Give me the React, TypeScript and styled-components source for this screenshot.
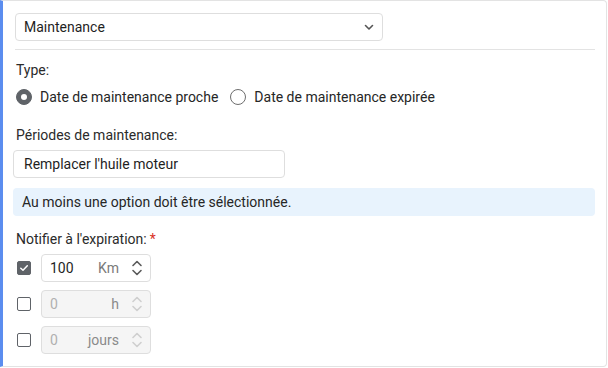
import React from "react";
import styled, { createGlobalStyle } from "styled-components";

const GlobalStyle = createGlobalStyle`
  html, body {
    margin: 0;
    padding: 0;
    background: #ffffff;
  }
  body {
    font-family: Roboto, "Liberation Sans", Arial, sans-serif;
    font-size: 14px;
    color: #212121;
  }
`;

const Card = styled.div`
  box-sizing: border-box;
  width: 607px;
  height: 367px;
  border: 1px solid #e3e3e3;
  border-left: 3px solid #5b8def;
  border-radius: 0 4px 4px 0;
  padding: 12px 11px 0 10px;
  display: flex;
  flex-direction: column;
`;

const SelectBox = styled.div`
  box-sizing: border-box;
  width: 368px;
  height: 28px;
  margin-left: 2px;
  border: 1px solid #dedede;
  border-radius: 4px;
  display: flex;
  align-items: center;
  justify-content: space-between;
  padding: 0 7px 0 8px;
  font-size: 14px;
  color: #1f1f1f;
`;

const Divider = styled.div`
  height: 1px;
  background: #e3e3e3;
  margin: 8px 0 0 2px;
`;

const Label = styled.div<{ $top: number }>`
  margin-top: ${(p) => p.$top}px;
  margin-left: 3px;
  line-height: 20px;
  font-size: 14px;
  color: #2b2b2b;
`;

const Required = styled.span`
  color: #d93025;
  margin-left: 3px;
`;

const RadioRow = styled.div`
  display: flex;
  align-items: center;
  margin-top: 7px;
  height: 20px;
`;

const RadioOption = styled.label`
  display: flex;
  align-items: center;
  gap: 8px;
  margin-right: 9px;
  margin-left: 3px;
  color: #262626;
`;

const RadioDot = styled.span<{ $checked?: boolean }>`
  box-sizing: border-box;
  width: 16px;
  height: 16px;
  border-radius: 50%;
  display: inline-flex;
  align-items: center;
  justify-content: center;
  background: ${(p) => (p.$checked ? "#5f6368" : "#fff")};
  border: 1px solid ${(p) => (p.$checked ? "#5f6368" : "#6e6e6e")};
  &::after {
    content: "";
    display: ${(p) => (p.$checked ? "block" : "none")};
    width: 6px;
    height: 6px;
    border-radius: 50%;
    background: #fff;
  }
`;

const TextInput = styled.div`
  box-sizing: border-box;
  width: 272px;
  height: 28px;
  margin-top: 5px;
  border: 1px solid #dedede;
  border-radius: 4px;
  display: flex;
  align-items: center;
  padding: 0 10px;
  color: #1f1f1f;
`;

const InfoBox = styled.div`
  box-sizing: border-box;
  height: 28px;
  margin-top: 10px;
  background: #e8f3fd;
  border-radius: 4px;
  display: flex;
  align-items: center;
  padding: 0 9px;
  color: #262626;
`;

const Rows = styled.div`
  display: flex;
  flex-direction: column;
  gap: 8px;
  margin-top: 5px;
`;

const Row = styled.div`
  display: flex;
  align-items: center;
  gap: 10px;
  padding-left: 4px;
`;

const Check = styled.span<{ $checked?: boolean }>`
  box-sizing: border-box;
  width: 14px;
  height: 14px;
  border-radius: 2px;
  border: 1.5px solid #5f6368;
  background: ${(p) => (p.$checked ? "#5f6368" : "#fff")};
  display: inline-flex;
  align-items: center;
  justify-content: center;
`;

const NumberField = styled.div<{ $disabled?: boolean }>`
  box-sizing: border-box;
  width: 110px;
  height: 28px;
  border: 1px solid #dedede;
  border-radius: 4px;
  background: ${(p) => (p.$disabled ? "#f5f5f5" : "#fff")};
  display: flex;
  align-items: center;
  padding: 0 7px 0 8px;
  color: ${(p) => (p.$disabled ? "#b0b0b0" : "#1f1f1f")};
`;

const Value = styled.span`
  flex: 1;
`;

const Unit = styled.span<{ $disabled?: boolean }>`
  color: ${(p) => (p.$disabled ? "#8a8a8a" : "#7a7a7a")};
  margin-right: 12px;
`;

const Spinner = styled.svg`
  display: block;
`;

const Chevron = () => (
  <svg width="12" height="12" viewBox="0 0 12 12">
    <path d="M2.5 4.5 L6 8 L9.5 4.5" fill="none" stroke="#555" strokeWidth="1.6" strokeLinecap="round" strokeLinejoin="round" />
  </svg>
);

const Tick = () => (
  <svg width="10" height="10" viewBox="0 0 10 10">
    <path d="M1.8 5.2 L4 7.3 L8.3 2.8" fill="none" stroke="#fff" strokeWidth="1.5" strokeLinecap="round" strokeLinejoin="round" />
  </svg>
);

const UpDown = ({ disabled }: { disabled?: boolean }) => (
  <Spinner width="12" height="18" viewBox="0 0 12 18">
    <path
      d="M2 6.5 L6 2.5 L10 6.5 M2 11.5 L6 15.5 L10 11.5"
      fill="none"
      stroke={disabled ? "#cfcfcf" : "#5a5a5a"}
      strokeWidth="1.6"
      strokeLinecap="round"
      strokeLinejoin="round"
    />
  </Spinner>
);

interface Period {
  value: string;
  unit: string;
  checked: boolean;
}

const periods: Period[] = [
  { value: "100", unit: "Km", checked: true },
  { value: "0", unit: "h", checked: false },
  { value: "0", unit: "jours", checked: false },
];

const App: React.FC = () => {
  return (
    <>
      <GlobalStyle />
      <Card>
        <SelectBox>
          <span>Maintenance</span>
          <Chevron />
        </SelectBox>
        <Divider />

        <Label $top={10}>Type:</Label>
        <RadioRow>
          <RadioOption>
            <RadioDot $checked />
            Date de maintenance proche
          </RadioOption>
          <RadioOption>
            <RadioDot />
            Date de maintenance expirée
          </RadioOption>
        </RadioRow>

        <Label $top={18}>Périodes de maintenance:</Label>
        <TextInput>Remplacer l'huile moteur</TextInput>

        <InfoBox>Au moins une option doit être sélectionnée.</InfoBox>

        <Label $top={13}>
          Notifier à l'expiration:<Required>*</Required>
        </Label>
        <Rows>
          {periods.map((p) => (
            <Row key={p.unit}>
              <Check $checked={p.checked}>{p.checked && <Tick />}</Check>
              <NumberField $disabled={!p.checked}>
                <Value>{p.value}</Value>
                <Unit $disabled={!p.checked}>{p.unit}</Unit>
                <UpDown disabled={!p.checked} />
              </NumberField>
            </Row>
          ))}
        </Rows>
      </Card>
    </>
  );
};

export default App;
